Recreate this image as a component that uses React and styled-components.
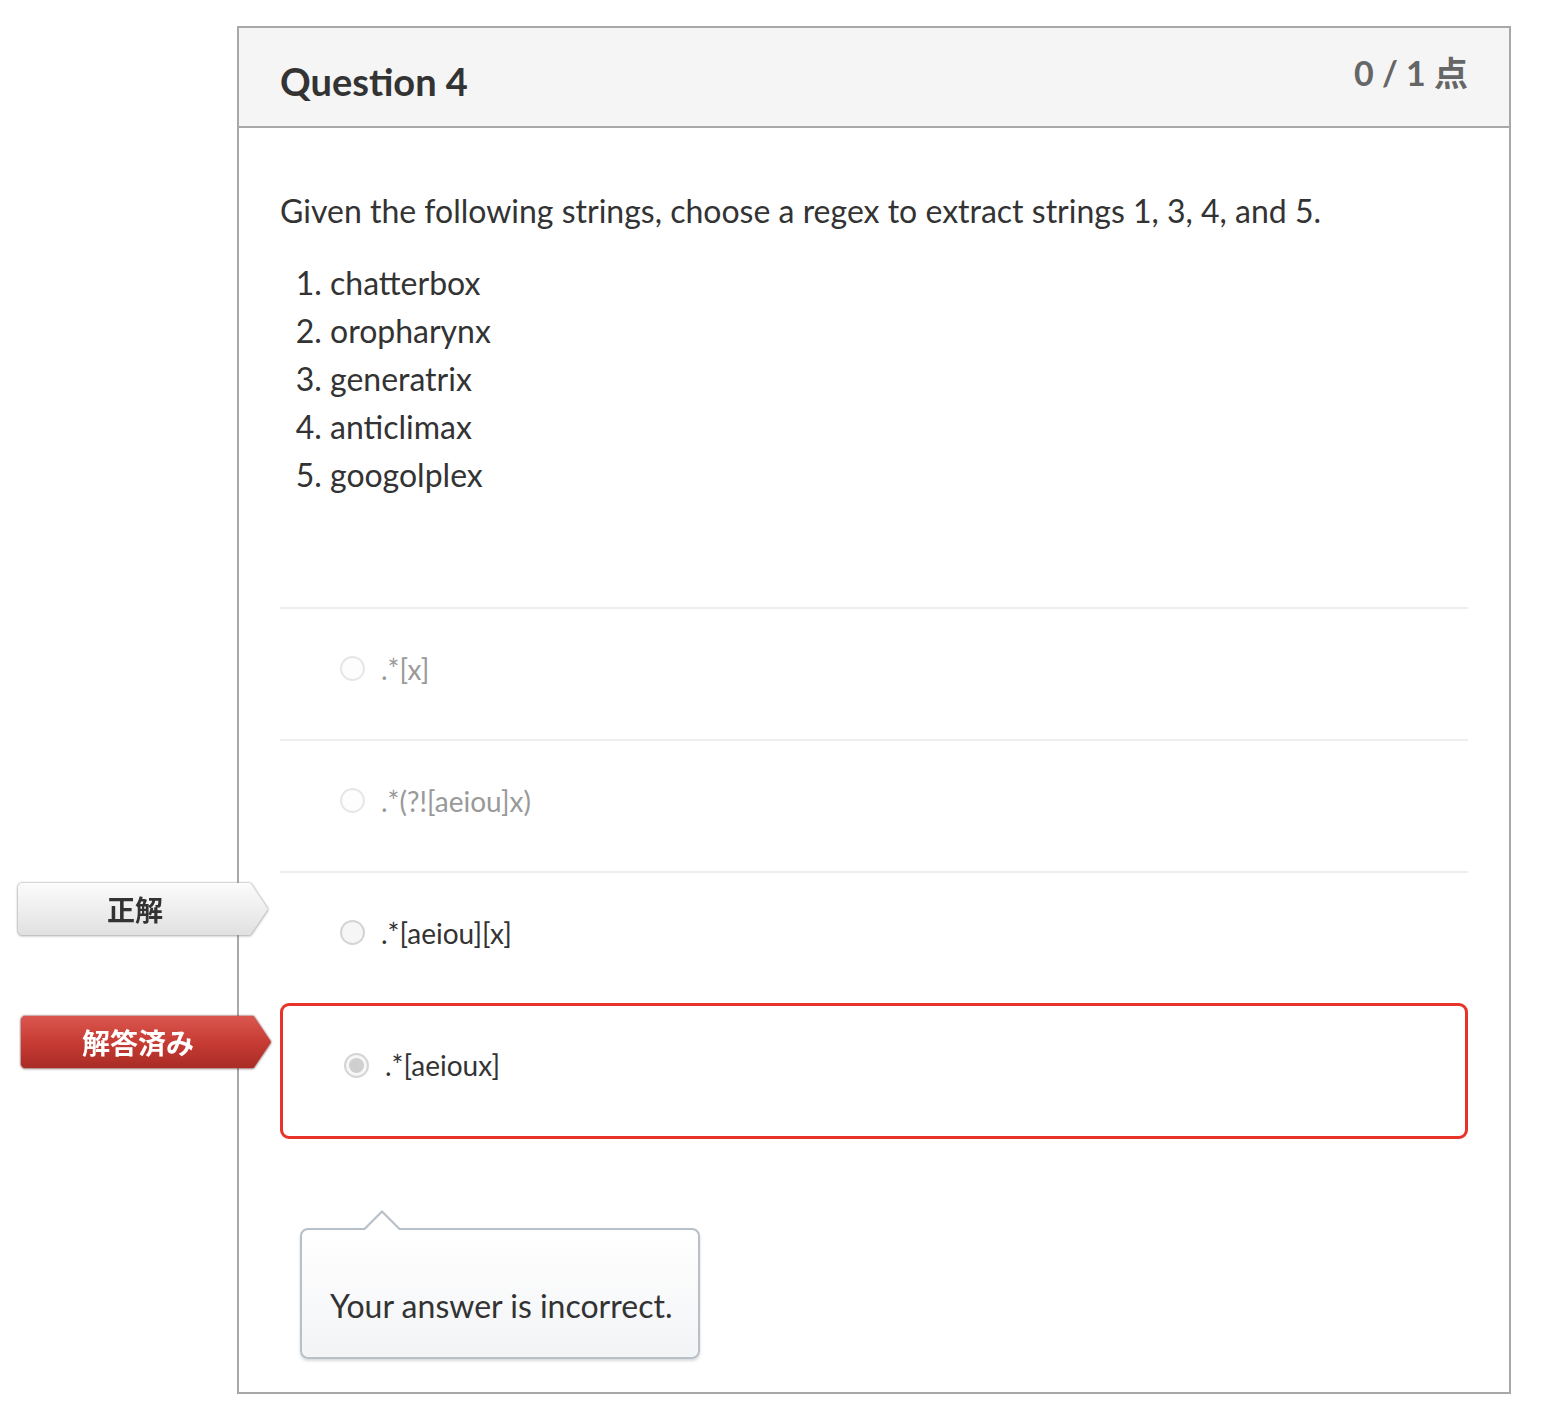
import React from 'react';
import styled, { createGlobalStyle } from 'styled-components';

const GlobalStyle = createGlobalStyle`
  body {
    margin: 0;
    background: #fff;
    font-family: Lato, "Noto Sans CJK JP", sans-serif;
    color: #2d3b45;
  }
`;

const Page = styled.div`
  padding: 26px 0 10px 237px;
`;

const Card = styled.div`
  width: 1270px;
  border: 2px solid #a8a8a8;
  background: #fff;
`;

const Header = styled.div`
  display: flex;
  justify-content: space-between;
  align-items: flex-start;
  height: 98px;
  padding: 0 41px;
  background: #f5f5f5;
  border-bottom: 2px solid #a8a8a8;
`;

const Title = styled.h2`
  margin: 0;
  padding-top: 29px;
  font-size: 38px;
  font-weight: 700;
  line-height: 48px;
  color: #333;
`;

const Score = styled.div`
  padding-top: 21px;
  font-size: 34px;
  font-weight: 700;
  line-height: 48px;
  color: #666;
`;

const Body = styled.div`
  padding: 59px 41px 33px;
`;

const Prompt = styled.p`
  margin: 0 0 24px;
  font-size: 32px;
  line-height: 48px;
  color: #333;
`;

const Strings = styled.ol`
  margin: 0 0 108px;
  padding-left: 50px;
  font-size: 32px;
  line-height: 48px;
  color: #333;
`;

const Answers = styled.div`
  display: flex;
  flex-direction: column;
`;

const Answer = styled.div`
  position: relative;
  display: flex;
  align-items: center;
  gap: 16px;
  box-sizing: content-box;
  height: 119px;
  padding: 0 0 11px 60px;
  border-top: 2px solid #eee;
  color: ${({ $muted }) => ($muted ? '#999' : '#333')};

  ${({ $selected }) =>
    $selected &&
    `
    border: 3px solid #e8332a;
    border-radius: 9px;
    height: 118px;
    padding: 0 0 12px 61px;
  `}
`;

const Radio = styled.span`
  box-sizing: border-box;
  width: 25px;
  height: 25px;
  border-radius: 50%;
  border: 2px solid ${({ $muted }) => ($muted ? '#e6e6e6' : '#d4d4d4')};
  background: ${({ $muted }) => ($muted ? '#fdfdfd' : '#f6f6f6')};
  display: flex;
  align-items: center;
  justify-content: center;

  &::after {
    content: '';
    display: ${({ $checked }) => ($checked ? 'block' : 'none')};
    width: 15px;
    height: 15px;
    border-radius: 50%;
    background: #cfcfcf;
  }
`;

const AnswerText = styled.span`
  font-size: 28px;
  line-height: 40px;
`;

const LabelWrap = styled.div`
  position: absolute;
  top: 10px;
  left: ${({ $left }) => $left}px;
  filter: drop-shadow(0 0 1px ${({ $tone }) => ($tone === 'red' ? '#7a1d18' : '#9a9a9a')})
    drop-shadow(0 1px 1px rgba(0, 0, 0, 0.2));
`;

const Label = styled.div`
  width: 250px;
  height: 52px;
  display: flex;
  align-items: center;
  justify-content: center;
  padding-right: 16px;
  box-sizing: border-box;
  clip-path: polygon(0 6%, 1% 0, 93% 0, 100% 50%, 93% 100%, 1% 100%, 0 94%);
  font-family: "Noto Sans CJK JP", sans-serif;
  font-size: 28px;
  font-weight: 700;
  color: ${({ $tone }) => ($tone === 'red' ? '#fff' : '#333')};
  background: ${({ $tone }) =>
    $tone === 'red'
      ? 'linear-gradient(#d9574f, #c73c34 50%, #a92c25)'
      : 'linear-gradient(#fbfbfb, #ececec 60%, #e0e0e0)'};
`;

const Tip = styled.div`
  position: relative;
  width: 400px;
  margin: 89px 0 0 20px;
  box-sizing: border-box;
  height: 131px;
  display: flex;
  align-items: flex-end;
  padding: 0 0 31px 28px;
  border: 2px solid #b7c0c9;
  border-radius: 8px;
  background: linear-gradient(#fff, #f3f4f6);
  box-shadow: 0 2px 3px rgba(0, 0, 0, 0.15);
  font-size: 32px;
  line-height: 40px;
  color: #333;

  &::before,
  &::after {
    content: '';
    position: absolute;
    left: 62px;
    width: 0;
    height: 0;
    border-left: 18px solid transparent;
    border-right: 18px solid transparent;
  }

  &::before {
    top: -20px;
    border-bottom: 18px solid #b7c0c9;
  }

  &::after {
    top: -17px;
    border-bottom: 18px solid #fff;
  }
`;

const answers = [
  { text: '.*[x]', muted: true },
  { text: '.*(?![aeiou]x)', muted: true },
  { text: '.*[aeiou][x]', label: '正解', tone: 'gray' },
  { text: '.*[aeioux]', selected: true, checked: true, label: '解答済み', tone: 'red' },
];

const strings = ['chatterbox', 'oropharynx', 'generatrix', 'anticlimax', 'googolplex'];

export default function App() {
  return (
    <Page>
      <GlobalStyle />
      <Card>
        <Header>
          <Title>Question 4</Title>
          <Score>0 / 1 点</Score>
        </Header>
        <Body>
          <Prompt>
            Given the following strings, choose a regex to extract strings 1, 3, 4, and 5.
          </Prompt>
          <Strings>
            {strings.map((s) => (
              <li key={s}>{s}</li>
            ))}
          </Strings>
          <Answers>
            {answers.map((a) => (
              <Answer key={a.text} $muted={a.muted} $selected={a.selected}>
                {a.label && (
                  <LabelWrap $tone={a.tone} $left={-262}>
                    <Label $tone={a.tone}>{a.label}</Label>
                  </LabelWrap>
                )}
                <Radio $muted={a.muted} $checked={a.checked} />
                <AnswerText>{a.text}</AnswerText>
              </Answer>
            ))}
          </Answers>
          <Tip>Your answer is incorrect.</Tip>
        </Body>
      </Card>
    </Page>
  );
}
